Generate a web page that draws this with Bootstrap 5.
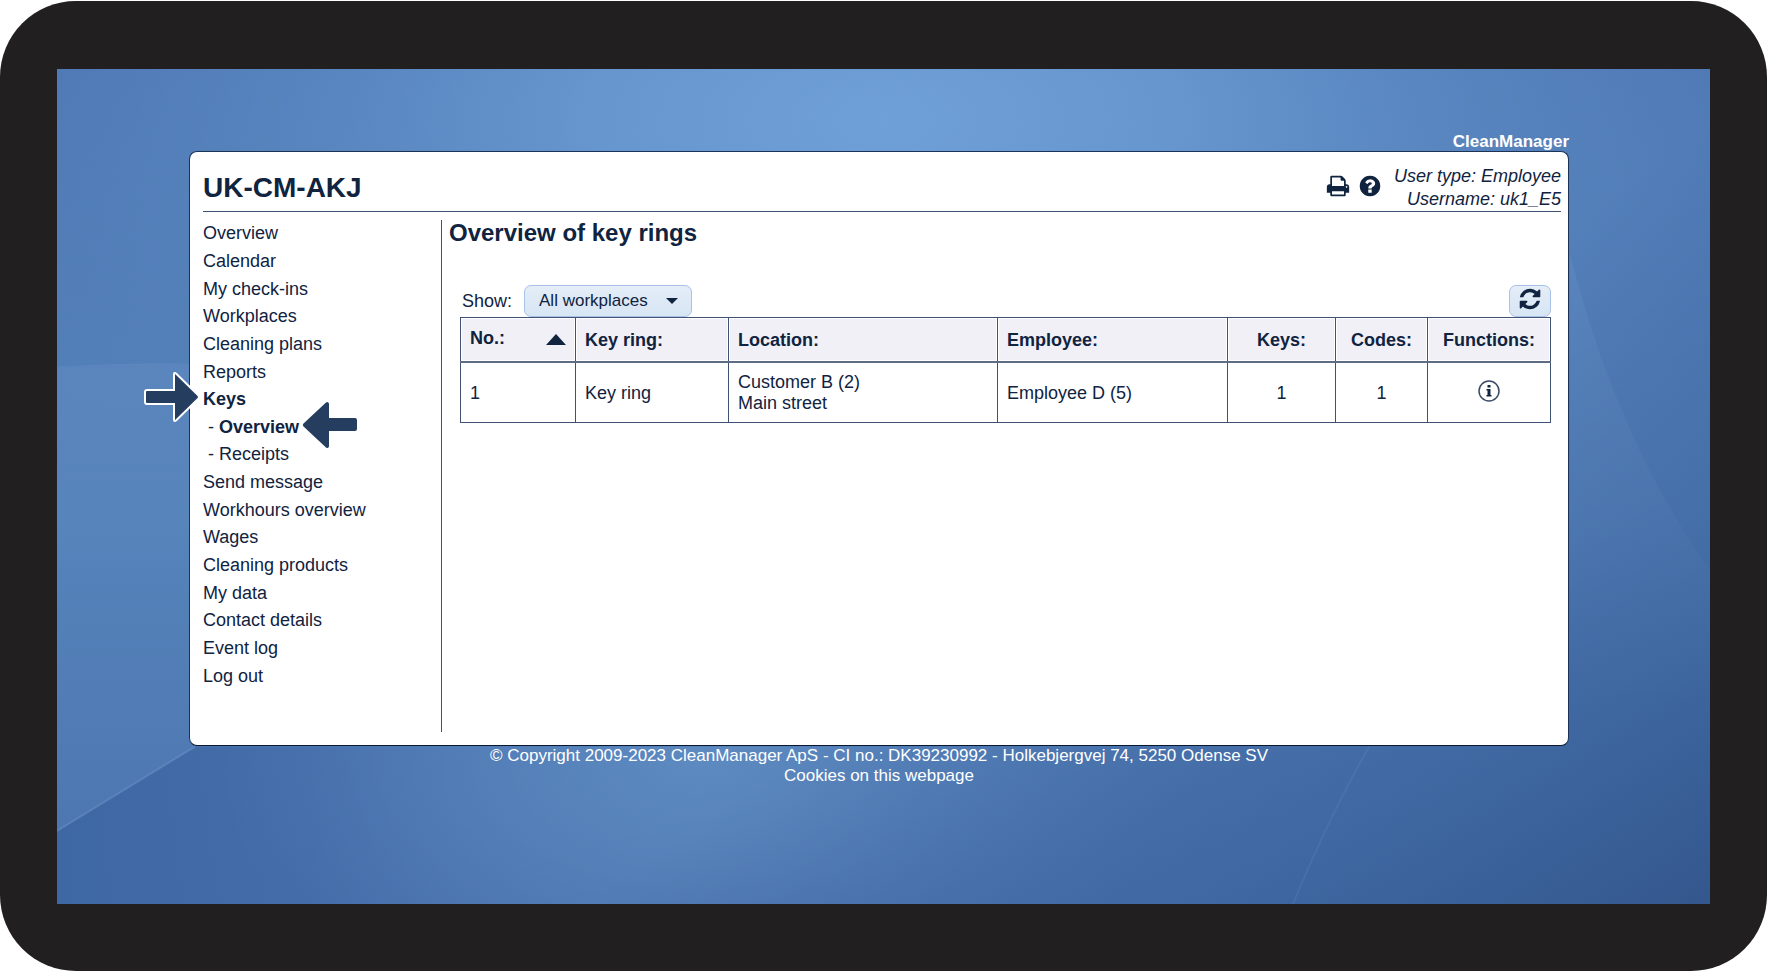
<!DOCTYPE html>
<html lang="en">
<head>
<meta charset="utf-8">
<meta name="viewport" content="width=device-width, initial-scale=1">
<title>CleanManager - Overview of key rings</title>
<link rel="stylesheet" href="https://cdn.jsdelivr.net/npm/bootstrap@5.3.0/dist/css/bootstrap.min.css">
<style>
  :root { --ink: #10233f; --rule: #3f5272; --arrow: #253e60; }
  body { font-family: "Liberation Sans", Arial, sans-serif; font-size: 18px; line-height: 21px; color: var(--ink); background: #fff; }
  a { color: inherit; text-decoration: none; }
  a:hover { text-decoration: underline; }

  /* Tablet bezel and wallpaper */
  .bezel { min-height: calc(100vh - 1px); margin-top: 1px; padding: 68px 57px 67px; background: #221f20; border-radius: 76px; }
  .screen { isolation: isolate; padding: 63px 141px 24px 132px; background: #5480ba; }
  .wallpaper { z-index: -1; }

  .brand { font-size: 17px; line-height: 19px; color: #fff; }
  .panel { background: #fff; border: 1px solid #1d3355; border-bottom-color: #0a1830; border-radius: 8px; padding: 13px 7px 13px 13px; }
  .panel-head { border-bottom: 1px solid var(--rule); }
  .panel-head h1 { font-size: 28px; line-height: 45px; }
  .user-info { line-height: 23px; }
  .icon { width: 24px; height: 24px; fill: var(--ink); display: block; }

  /* Side menu */
  .side { width: 239px; min-height: 512px; border-right: 1px solid var(--rule); }
  .menu { display: grid; grid-auto-rows: 1fr; align-items: center; min-height: 470px; }
  .sub { padding-left: 5px; }
  .pointer { position: absolute; fill: var(--arrow); }
  .pointer-right { right: 100%; top: -19px; margin-right: 2px; }
  .pointer-left { left: 100%; top: -16px; margin-left: 3px; }

  /* Content */
  .content { padding: 0 10px 0 18px; }
  .content h2 { font-size: 24px; line-height: 25px; margin-left: -11px; }
  .toolbar { margin-top: 40px; padding-left: 2px; }
  .control { height: 32px; border: 1px solid #a9c3e8; border-radius: 7px; background-color: #dde9f5; color: var(--ink); }
  .workplaces { width: 168px; font-size: 17px; padding: 0 14px 2px; appearance: none; background-repeat: no-repeat;
    background-image: url("data:image/svg+xml,%3Csvg xmlns='http://www.w3.org/2000/svg' width='12' height='8'%3E%3Cpath d='M0 1h12L6 7z' fill='%2310233f'/%3E%3C/svg%3E"), linear-gradient(#e4edf7, #d7e5f4); background-size: 12px 8px, 100% 100%; background-position: right 13px center, 0 0; }
  .reload { width: 42px; padding: 0 0 4px; background-image: linear-gradient(#e4edf7, #d7e5f4); }

  .rings { table-layout: fixed; min-width: 960px; border-collapse: collapse; }
  .rings th, .rings td { border: 1px solid var(--rule); padding: 2px 9px 0; }
  .rings th { height: 44px; background: #f1f0f7; box-shadow: inset 0 0 0 1px #fff; border-bottom: 2px solid #5d6c84; }
  .rings td { height: 61px; }
  .rings .sorted { padding-bottom: 3px; }
  .c-no { width: 115px; } .c-ring { width: 153px; } .c-emp { width: 230px; }
  .c-keys { width: 108px; } .c-codes { width: 92px; } .c-fn { width: 123px; }

  .legal { font-size: 17px; line-height: 20px; color: #fff; }
</style>
<script src="https://cdn.jsdelivr.net/npm/bootstrap@5.3.0/dist/js/bootstrap.bundle.min.js"></script>
</head>
<body>
<div class="bezel d-flex flex-column">
  <div class="screen position-relative flex-grow-1">
    <svg class="wallpaper position-absolute top-0 start-0 w-100 h-100" viewBox="0 0 1653 833" preserveAspectRatio="none" aria-hidden="true">
      <defs>
        <linearGradient id="base" x1="0" y1="0" x2="0" y2="1">
          <stop offset="0" stop-color="#4d77b3"/><stop offset=".55" stop-color="#5683bb"/><stop offset="1" stop-color="#4b74ae"/>
        </linearGradient>
        <radialGradient id="glow" cx=".5" cy=".06" r=".6">
          <stop offset="0" stop-color="#70a0d8"/><stop offset=".3" stop-color="#6999d1" stop-opacity=".9"/><stop offset="1" stop-color="#5480ba" stop-opacity="0"/>
        </radialGradient>
        <linearGradient id="shade" gradientUnits="userSpaceOnUse" x1="1180" y1="380" x2="1540" y2="900">
          <stop offset="0" stop-color="#3a629d" stop-opacity="0"/><stop offset=".5" stop-color="#3a629d" stop-opacity=".6"/><stop offset="1" stop-color="#34588e"/>
        </linearGradient>
        <linearGradient id="floor" x1="0" y1="0" x2="1" y2="0">
          <stop offset="0" stop-color="#3e68a4"/><stop offset=".4" stop-color="#416aa6" stop-opacity=".8"/><stop offset="1" stop-color="#4a74b0" stop-opacity="0"/>
        </linearGradient>
        <radialGradient id="pool" gradientUnits="userSpaceOnUse" cx="0" cy="0" r="1" gradientTransform="translate(640 690) scale(480 280)">
          <stop offset="0" stop-color="#628fc6" stop-opacity=".75"/><stop offset="1" stop-color="#5c88bf" stop-opacity="0"/>
        </radialGradient>
        <linearGradient id="beam" x1="0" y1="0" x2="0" y2="1">
          <stop offset="0" stop-color="#8fb0dc" stop-opacity=".12"/><stop offset="1" stop-color="#8fb0dc" stop-opacity="0"/>
        </linearGradient>
      </defs>
      <path fill="url(#base)" d="M0 0h1653v833H0z"/>
      <path fill="url(#glow)" d="M0 0h1653v833H0z"/>
      <path fill="url(#beam)" d="M0 297Q80 292 160 295V500H0z"/>
      <path fill="url(#floor)" d="M0 760L138 676H640V833H0z"/>
      <path fill="url(#pool)" d="M138 676H1200V833H0V760z"/>
      <path fill="url(#shade)" d="M0 0h1653v833H0z"/>
      <path fill="url(#beam)" d="M1513 185Q1560 370 1653 500V640H1513z"/>
      <path d="M0 760L138 676" stroke="#7ba3d3" stroke-opacity=".35" stroke-width="2"/>
      <path d="M1312 676Q1270 750 1236 833" stroke="#7ba3d3" stroke-opacity=".15" stroke-width="2" fill="none"/>
    </svg>

    <div class="brand fw-bold text-end">CleanManager</div>

    <div class="panel">
      <header class="panel-head d-flex justify-content-between align-items-start">
        <h1 class="fw-bold mb-0">UK-CM-AKJ</h1>
        <div class="d-flex align-items-center">
          <div class="d-flex gap-2 me-2 pe-1 pb-1">
            <button type="button" class="btn p-0 border-0" aria-label="Print">
              <svg class="icon" viewBox="0 0 1792 1792"><path d="M448 1536h896v-256h-896v256zm0-640h896v-384h-160q-40 0-68-28t-28-68v-160h-640v640zm1152 64q0-26-19-45t-45-19-45 19-19 45 19 45 45 19 45-19 19-45zm128 0v416q0 13-9.500 22.500t-22.500 9.500h-224v160q0 40-28 68t-68 28h-960q-40 0-68-28t-28-68v-160h-224q-13 0-22.500-9.500t-9.500-22.500v-416q0-79 56.500-135.500t135.500-56.500h64v-544q0-40 28-68t68-28h672q40 0 88 20t76 48l152 152q28 28 48 76t20 88v256h64q79 0 135.500 56.500t56.500 135.500z"/></svg>
            </button>
            <button type="button" class="btn p-0 border-0" aria-label="Help">
              <svg class="icon" viewBox="0 0 1792 1792"><path d="M1024 1376v-192q0-14-9-23t-23-9h-192q-14 0-23 9t-9 23v192q0 14 9 23t23 9h192q14 0 23-9t9-23zm256-672q0-88-55.500-163t-138.500-116-170-41q-243 0-371 213-15 24 8 42l132 100q7 6 19 6 16 0 25-12 53-68 86-92 34-24 86-24 48 0 85.500 26t37.500 59q0 38-20 61t-68 45q-63 28-115.500 86.500t-52.500 125.500v36q0 14 9 23t23 9h192q14 0 23-9t9-23q0-19 21.500-49.500t54.500-49.500q32-18 49-28.500t46-35 44.500-48 28-60.500 12.500-81zm384 192q0 209-103 385.500t-279.500 279.500-385.500 103-385.500-103-279.500-279.500-103-385.500 103-385.500 279.500-279.500 385.500-103 385.500 103 279.500 279.500 103 385.500z"/></svg>
            </button>
          </div>
          <div class="user-info fst-italic text-end">User type: Employee<br>Username: uk1_E5</div>
        </div>
      </header>

      <div class="d-flex pt-2">
        <nav class="side flex-shrink-0" aria-label="Main menu">
          <ul class="menu list-unstyled mb-0">
            <li><a href="#">Overview</a></li>
            <li><a href="#">Calendar</a></li>
            <li><a href="#">My check-ins</a></li>
            <li><a href="#">Workplaces</a></li>
            <li><a href="#">Cleaning plans</a></li>
            <li><a href="#">Reports</a></li>
            <li><span class="position-relative d-inline-block"><a href="#" class="fw-bold">Keys</a>
              <svg class="pointer pointer-right" width="58" height="54" viewBox="0 0 58 54" aria-hidden="true"><path d="M4 20H31V4.500Q31 2 33 3.500L55 25Q57 27 55 29L33 50.500Q31 52 31 49.500V34H4Q2 34 2 32V22Q2 20 4 20z" stroke="#fff" stroke-width="2"/></svg></span></li>
            <li class="sub">- <span class="position-relative d-inline-block"><a href="#" class="fw-bold">Overview</a>
              <svg class="pointer pointer-left" width="56" height="48" viewBox="0 0 56 48" aria-hidden="true"><path d="M53 17H27V2.500Q26 0 24 1.500L1.500 22.500Q0 24 1.500 25.500L24 46.500Q26 48 27 45.500V30H53Q55 30 55 28V19Q55 17 53 17z"/></svg></span></li>
            <li class="sub">- <a href="#">Receipts</a></li>
            <li><a href="#">Send message</a></li>
            <li><a href="#">Workhours overview</a></li>
            <li><a href="#">Wages</a></li>
            <li><a href="#">Cleaning products</a></li>
            <li><a href="#">My data</a></li>
            <li><a href="#">Contact details</a></li>
            <li><a href="#">Event log</a></li>
            <li><a href="#">Log out</a></li>
          </ul>
        </nav>

        <main class="content flex-grow-1">
          <h2 class="fw-bold mb-0">Overview of key rings</h2>
          <div class="toolbar d-flex align-items-center">
            <label for="workplaces" class="me-2 pe-1">Show:</label>
            <select id="workplaces" class="control workplaces"><option>All workplaces</option></select>
            <button type="button" class="control reload btn ms-auto d-flex align-items-center justify-content-center" aria-label="Refresh">
              <svg class="icon" viewBox="0 0 1792 1792"><path d="M1639 1056q0 5-1 7-64 268-268 434.500t-478 166.500q-146 0-282.500-55t-243.500-157l-129 129q-19 19-45 19t-45-19-19-45v-448q0-26 19-45t45-19h448q26 0 45 19t19 45-19 45l-137 137q71 66 161 102t187 36q134 0 250-65t186-179q11-17 53-117 8-23 30-23h192q13 0 22.500 9.500t9.500 22.500zm25-800v448q0 26-19 45t-45 19h-448q-26 0-45-19t-19-45 19-45l138-138q-148-137-349-137-134 0-250 65t-186 179q-11 17-53 117-8 23-30 23h-199q-13 0-22.500-9.500t-9.500-22.500v-7q65-268 270-434.500t480-166.500q146 0 284 55.500t245 156.500l130-129q19-19 45-19t45 19 19 45z"/></svg>
            </button>
          </div>
          <table class="rings w-100">
            <colgroup><col class="c-no"><col class="c-ring"><col><col class="c-emp"><col class="c-keys"><col class="c-codes"><col class="c-fn"></colgroup>
            <thead>
              <tr>
                <th scope="col" class="sorted" aria-sort="ascending"><span class="d-flex justify-content-between align-items-center">No.:
                  <svg width="20" height="12" viewBox="0 0 20 12" fill="#10233f" aria-hidden="true"><path d="M0 12L10 1l10 11z"/></svg></span></th>
                <th scope="col">Key ring:</th>
                <th scope="col">Location:</th>
                <th scope="col">Employee:</th>
                <th scope="col" class="text-center">Keys:</th>
                <th scope="col" class="text-center">Codes:</th>
                <th scope="col" class="text-center">Functions:</th>
              </tr>
            </thead>
            <tbody>
              <tr>
                <td>1</td>
                <td>Key ring</td>
                <td>Customer B (2)<br>Main street</td>
                <td>Employee D (5)</td>
                <td class="text-center">1</td>
                <td class="text-center">1</td>
                <td class="text-center pb-1"><button type="button" class="btn p-0 border-0" aria-label="Details">
                  <svg class="d-block" width="22" height="22" viewBox="0 0 22 22" fill="#10233f"><circle cx="11" cy="11" r="10" fill="none" stroke="#3b4b66" stroke-width="1.500"/><path d="M9.500 5h3v2.500h-3zM8.500 9h4v6h1v1.500h-5V15h1v-4.500h-1z"/></svg></button></td>
              </tr>
            </tbody>
          </table>
        </main>
      </div>
    </div>

    <footer class="legal text-center">© Copyright 2009-2023 CleanManager ApS - CI no.: DK39230992 - Holkebjergvej 74, 5250 Odense SV<br><a href="#">Cookies on this webpage</a></footer>
  </div>
</div>
</body>
</html>
